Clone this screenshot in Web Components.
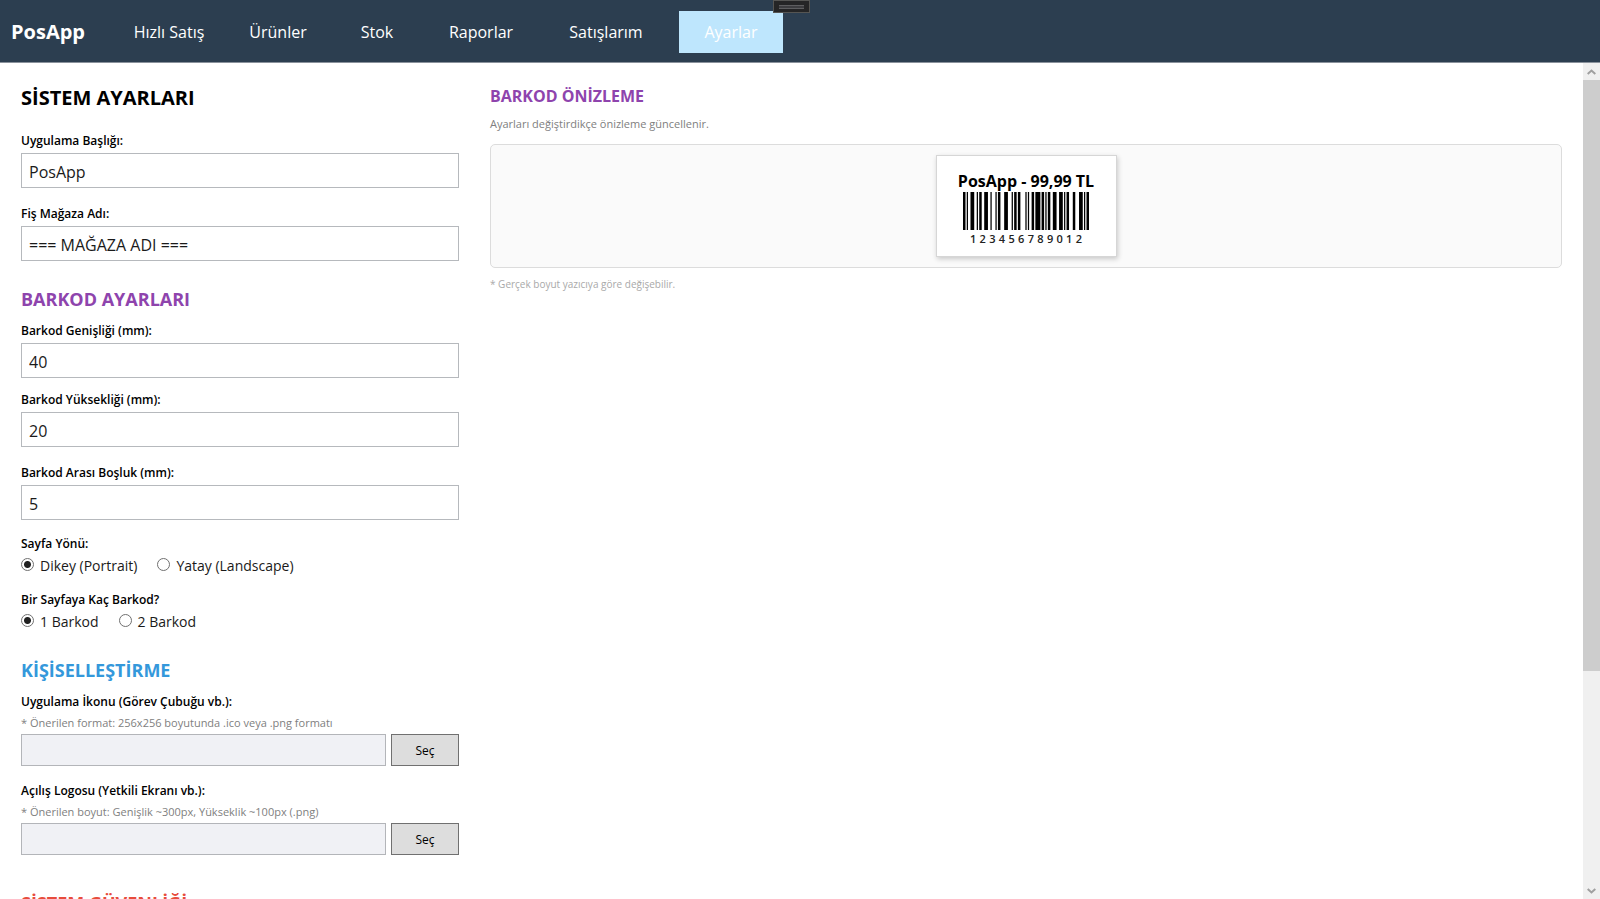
<!DOCTYPE html>
<html lang="tr">
<head>
<meta charset="utf-8">
<title>PosApp</title>
<style>
  html, body { height: 100%; margin: 0; }
  body {
    font-family: "Open Sans", "Noto Sans", sans-serif;
    font-size: 16px;
    color: #000;
    background: #fff;
    overflow: hidden;
  }
</style>
</head>
<body>
<pos-app>
  <pos-nav slot="nav" brand="PosApp">
    <pos-nav-item size="xl">Hızlı Satış</pos-nav-item>
    <pos-nav-item>Ürünler</pos-nav-item>
    <pos-nav-item>Stok</pos-nav-item>
    <pos-nav-item size="l">Raporlar</pos-nav-item>
    <pos-nav-item size="xxl">Satışlarım</pos-nav-item>
    <pos-nav-item size="l" active>Ayarlar</pos-nav-item>
  </pos-nav>

  <settings-form slot="form">
    <settings-section variant="title" heading="SİSTEM AYARLARI">
      <text-field label="Uygulama Başlığı:" value="PosApp"></text-field>
      <text-field label="Fiş Mağaza Adı:" value="=== MAĞAZA ADI ==="></text-field>
    </settings-section>
    <settings-section variant="purple" heading="BARKOD AYARLARI">
      <text-field label="Barkod Genişliği (mm):" value="40" dense></text-field>
      <text-field label="Barkod Yüksekliği (mm):" value="20"></text-field>
      <text-field label="Barkod Arası Boşluk (mm):" value="5"></text-field>
      <radio-group label="Sayfa Yönü:" options="Dikey (Portrait)|Yatay (Landscape)"></radio-group>
      <radio-group label="Bir Sayfaya Kaç Barkod?" options="1 Barkod|2 Barkod"></radio-group>
    </settings-section>
    <settings-section variant="blue" heading="KİŞİSELLEŞTİRME">
      <file-field label="Uygulama İkonu (Görev Çubuğu vb.):" hint="* Önerilen format: 256x256 boyutunda .ico veya .png formatı"></file-field>
      <file-field label="Açılış Logosu (Yetkili Ekranı vb.):" hint="* Önerilen boyut: Genişlik ~300px, Yükseklik ~100px (.png)"></file-field>
    </settings-section>
    <settings-section variant="red" heading="SİSTEM GÜVENLİĞİ"></settings-section>
  </settings-form>

  <barcode-preview slot="preview" heading="BARKOD ÖNİZLEME">
    <span slot="hint">Ayarları değiştirdikçe önizleme güncellenir.</span>
    <barcode-label code="123456789012">PosApp - 99,99 TL</barcode-label>
    <span slot="note">* Gerçek boyut yazıcıya göre değişebilir.</span>
  </barcode-preview>
</pos-app>

<script>
class Base extends HTMLElement {
  connectedCallback() {
    if (this.shadowRoot) return;
    const root = this.attachShadow({ mode: 'open' });
    root.innerHTML = `<style>*{box-sizing:border-box}${this.constructor.css}</style>${this.render()}`;
    this.ready?.(root);
  }
  attr(name) { return (this.getAttribute(name) || '').replace(/&/g, '&amp;').replace(/"/g, '&quot;').replace(/</g, '&lt;'); }
}

/* Window frame: navigation on top, two scrolling columns below */
customElements.define('pos-app', class extends Base {
  static css = `
    :host { display: flex; flex-direction: column; height: 100vh; }
    .body { flex: 1; min-height: 0; display: flex; }
    main {
      flex: 1; min-width: 0; overflow-y: auto; scrollbar-width: none;
      display: grid; grid-template-columns: minmax(300px, 438px) minmax(0, 1fr);
      column-gap: 31px; align-content: start; padding: 20px 21px;
    }
    .tool {
      position: absolute; top: 0; left: 773px; width: 37px; height: 13px;
      display: grid; place-items: center; background: #252526; border: 1px solid #555553;
    }
    .tool i { width: 25px; height: 4px; border: solid #5e5e60; border-width: 1px 0; background: #3d3d40; }
  `;
  render() {
    return `<slot name="nav"></slot>
      <div class="tool" aria-hidden="true"><i></i></div>
      <div class="body"><main><slot name="form"></slot><slot name="preview"></slot></main><scroll-rail></scroll-rail></div>`;
  }
  ready(root) {
    const main = root.querySelector('main');
    root.querySelector('scroll-rail').addEventListener('step', e => main.scrollBy(0, e.detail * 48));
  }
});

customElements.define('pos-nav', class extends Base {
  static css = `
    :host { display: block; background: #2c3e50; border-bottom: 1px solid #8a929c; color: #fff; }
    header { display: flex; align-items: center; height: 62px; padding: 2px 11px 0; }
    .brand { flex: none; width: 101px; font-size: 20px; font-weight: 700; line-height: 28px; }
    nav { display: flex; gap: 5px; }
  `;
  render() { return `<header><div class="brand">${this.attr('brand')}</div><nav><slot></slot></nav></header>`; }
});

customElements.define('pos-nav-item', class extends Base {
  static css = `
    :host { display: block; width: 94px; }
    :host([size="l"]) { width: 104px; }
    :host([size="xl"]) { width: 114px; }
    :host([size="xxl"]) { width: 136px; }
    a { display: flex; align-items: center; justify-content: center; height: 42px; color: #fff; text-decoration: none; font-size: 16px; white-space: nowrap; }
    :host([active]) a { background: #bee6fd; }
  `;
  render() { return `<a href="#"><slot></slot></a>`; }
});

customElements.define('settings-form', class extends Base {
  static css = `:host { display: block; min-width: 0; }`;
  render() { return `<slot></slot>`; }
});

customElements.define('settings-section', class extends Base {
  static css = `
    :host { display: block; }
    h2 { margin: 0 0 9px; font-size: 18px; font-weight: 700; line-height: 28px; }
    :host([variant="title"]) h2 { font-size: 20px; line-height: 30px; margin-bottom: 19px; }
    :host([variant="purple"]) { color: #8e44ad; padding-top: 9px; }
    :host([variant="blue"]) { color: #3498db; padding-top: 9px; }
    :host([variant="red"]) { color: #e74c3c; padding-top: 18px; }
  `;
  render() { return `<h2>${this.attr('heading')}</h2><slot></slot>`; }
});

customElements.define('text-field', class extends Base {
  static css = `
    :host { display: block; margin-bottom: 17px; color: #000; }
    :host([dense]) { margin-bottom: 13px; }
    :host(:last-of-type) { margin-bottom: 15px; }
    label { display: block; font-size: 12px; font-weight: 600; line-height: 18px; margin-bottom: 3px; }
    input {
      display: block; width: 100%; height: 35px; padding: 2px 7px 0; margin: 0;
      border: 1px solid #b6b9bd; border-radius: 0; background: #fff; color: #1a1a1a; font: inherit; font-size: 16px;
    }
  `;
  render() { return `<label for="f">${this.attr('label')}</label><input id="f" type="text" value="${this.attr('value')}">`; }
});

customElements.define('radio-group', class extends Base {
  static css = `
    :host { display: block; margin-bottom: 14px; color: #1a1a1a; }
    fieldset { border: 0; margin: 0; padding: 0; min-width: 0; }
    legend { padding: 0; font-size: 12px; font-weight: 600; line-height: 18px; color: #000; }
    .row { display: flex; gap: 20px; height: 24px; }
    label { display: flex; align-items: center; gap: 6px; font-size: 14px; white-space: nowrap; }
    input {
      appearance: none; width: 13px; height: 13px; margin: 0 0 2px; border: 1px solid #707070; border-radius: 50%;
      background: #fff;
    }
    input:checked { background: radial-gradient(circle, #212121 3px, #fff 4px); }
  `;
  render() {
    const opts = this.attr('options').split('|');
    return `<fieldset><legend>${this.attr('label')}</legend><div class="row">${opts.map((o, i) =>
      `<label><input type="radio" name="r" ${i ? '' : 'checked'}><span>${o}</span></label>`).join('')}</div></fieldset>`;
  }
});

customElements.define('file-field', class extends Base {
  static css = `
    :host { display: block; margin-bottom: 16px; color: #000; }
    label { display: block; font-size: 12px; font-weight: 600; line-height: 18px; }
    p { margin: 3px 0 2px; font-size: 11px; line-height: 18px; color: #808080; }
    .row { display: flex; gap: 5px; height: 32px; }
    input { flex: 1; min-width: 0; margin: 0; padding: 0 8px; border: 1px solid #b3b5b9; border-radius: 0; background: #f0f1f5; font: inherit; font-size: 12px; }
    button { width: 68px; margin: 0; padding: 0; border: 1px solid #707070; border-radius: 0; background: #ddd; color: #000; font: inherit; font-size: 12px; }
  `;
  render() {
    return `<label for="f">${this.attr('label')}</label><p id="h">${this.attr('hint')}</p>
      <div class="row"><input id="f" type="text" readonly aria-describedby="h"><button type="button">Seç</button></div>`;
  }
});

customElements.define('barcode-preview', class extends Base {
  static css = `
    :host { display: block; min-width: 0; }
    h2 { margin: 0; font-size: 16px; font-weight: 700; line-height: 26px; color: #8e44ad; }
    .hint { margin: 6px 0 11px; font-size: 11px; line-height: 18px; color: #808080; }
    .stage { display: flex; justify-content: center; padding: 10px; border: 1px solid #dcdcdc; border-radius: 5px; background: #fafafa; }
    .note { margin: 7px 0 0; font-size: 10px; line-height: 18px; color: #a9a9a9; }
  `;
  render() {
    return `<h2>${this.attr('heading')}</h2><p class="hint"><slot name="hint"></slot></p>
      <div class="stage"><slot></slot></div><p class="note"><slot name="note"></slot></p>`;
  }
});

/* Code 128 C patterns, limited to the pairs and check symbol of the sample label */
const CODE128 = { start: '211232', 12: '112232', 34: '131123', 56: '331121', 78: '241112', 90: '214121', 54: '311123', stop: '2331112' };

customElements.define('barcode-label', class extends Base {
  static css = `
    :host {
      display: flex; flex-direction: column; align-items: center; width: 181px; height: 102px; box-sizing: border-box; padding-top: 14px;
      background: #fff; border: 1px solid #d6d6d6; box-shadow: 1px 2px 5px rgba(0,0,0,.2); color: #000;
    }
    .name { font-size: 16px; font-weight: 700; line-height: 22px; white-space: nowrap; }
    svg { display: block; width: 126px; height: 38px; }
    .digits { display: flex; justify-content: space-between; width: 112px; font-size: 11px; font-weight: 600; line-height: 18px; color: #222; }
  `;
  render() {
    const code = this.attr('code');
    const pairs = code.match(/../g);
    const check = pairs.reduce((sum, p, i) => sum + p * (i + 1), 105) % 103;
    const widths = ['start', ...pairs, check, 'stop'].map(k => CODE128[k]).join('');
    let x = 0, bars = '';
    [...widths].forEach((w, i) => { if (i % 2 === 0) bars += `<rect x="${x}" width="${w}" height="1"/>`; x += +w; });
    return `<div class="name"><slot></slot></div>
      <svg viewBox="0 0 ${x} 1" preserveAspectRatio="none" aria-hidden="true">${bars}</svg>
      <div class="digits">${[...code].map(d => `<span>${d}</span>`).join('')}</div>`;
  }
});

customElements.define('scroll-rail', class extends Base {
  static css = `
    :host { display: flex; flex-direction: column; width: 17px; background: #f0f0f0; }
    button { display: grid; place-items: center; flex: none; width: 17px; height: 17px; margin: 0; padding: 0; border: 0; background: none; }
    svg { width: 9px; height: 6px; fill: none; stroke: #a0a0a0; stroke-width: 2; }
    .thumb { flex: 591; background: #cdcdcd; }
    .rest { flex: 211; }
  `;
  render() {
    return `<button type="button" aria-label="Yukarı"><svg viewBox="0 0 9 6"><path d="M.7 5 4.5 1.5 8.3 5"/></svg></button>
      <div class="thumb"></div><div class="rest"></div>
      <button type="button" aria-label="Aşağı"><svg viewBox="0 0 9 6"><path d="M.7 1 4.5 4.5 8.3 1"/></svg></button>`;
  }
  ready(root) {
    root.querySelectorAll('button').forEach((b, i) => b.addEventListener('click', () =>
      this.dispatchEvent(new CustomEvent('step', { detail: i ? 1 : -1 }))));
  }
});
</script>
</body>
</html>
